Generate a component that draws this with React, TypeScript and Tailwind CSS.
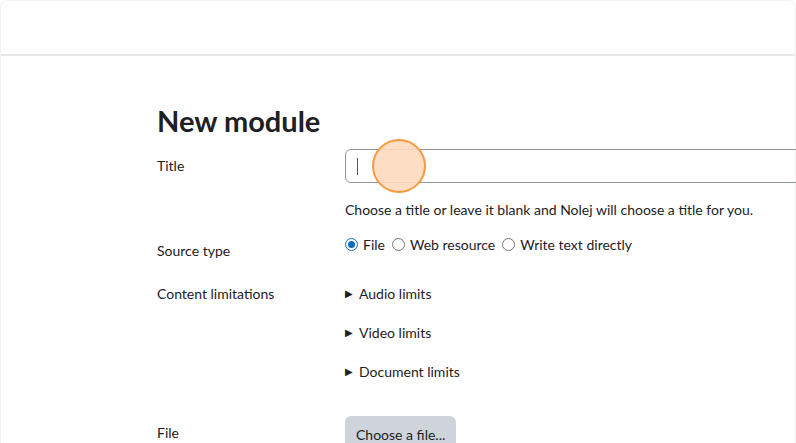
const font = { fontFamily: 'Lato, "Noto Sans", sans-serif' };

const Radio = ({ checked, label }: { checked?: boolean; label: string }) => (
  <label className="flex items-center gap-[5px] mr-[7px]">
    <span
      className={`w-[13px] h-[13px] rounded-full border flex items-center justify-center ${
        checked ? "border-[#0f6cbf]" : "border-[#767676]"
      }`}
    >
      {checked && <span className="w-[7px] h-[7px] rounded-full bg-[#0f6cbf]" />}
    </span>
    <span>{label}</span>
  </label>
);

const Limit = ({ label }: { label: string }) => (
  <div className="flex items-center gap-[6px] h-[20px]">
    <span className="text-[10px] leading-none text-[#1d2125]">▶</span>
    <span>{label}</span>
  </div>
);

export default function App() {
  return (
    <div
      style={font}
      className="w-[796px] h-[443px] overflow-hidden bg-white text-[14px] text-[#1d2125]"
    >
      <div className="h-full rounded-t-[8px] border border-[#f2f2f2] border-b-0">
        {/* barra superior */}
        <div className="h-[55px] border-b-2 border-[#e8e8e8]" />

        <div className="pl-[156px]">
          <h1 className="mt-[48px] text-[29px] leading-[34px] font-bold text-[#1d2125]">
            New module
          </h1>

          <div className="grid grid-cols-[188px_1fr]">
            {/* Title */}
            <div className="mt-[11px] h-[33px] flex items-center">Title</div>
            <div className="mt-[11px] relative">
              <div className="h-[34px] w-[500px] rounded-[6px] border border-[#8f959e] flex items-center pl-[11px]">
                <span className="w-[1px] h-[17px] bg-[#555]" />
              </div>
              <div className="absolute left-[27px] top-[-10px] w-[54px] h-[54px] rounded-full bg-[#fdd9bd]/90 border-2 border-[#f79a3e]" />
            </div>

            <div />
            <div className="mt-[16px] h-[20px] flex items-center">
              Choose a title or leave it blank and Nolej will choose a title for you.
            </div>

            {/* Source type */}
            <div className="mt-[21px] h-[20px] flex items-center">Source type</div>
            <div className="mt-[15px] h-[20px] flex items-center">
              <Radio checked label="File" />
              <Radio label="Web resource" />
              <Radio label="Write text directly" />
            </div>

            {/* Content limitations */}
            <div className="mt-[23px] h-[20px] flex items-center">Content limitations</div>
            <div className="mt-[23px] flex flex-col gap-[19px]">
              <Limit label="Audio limits" />
              <Limit label="Video limits" />
              <Limit label="Document limits" />
            </div>

            {/* File */}
            <div className="mt-[41px] h-[20px] flex items-center">File</div>
            <div className="mt-[35px]">
              <button className="h-[36px] px-[11px] rounded-[6px] bg-[#ced4da] text-[#1d2125]">
                Choose a file...
              </button>
            </div>
          </div>
        </div>
      </div>
    </div>
  );
}
